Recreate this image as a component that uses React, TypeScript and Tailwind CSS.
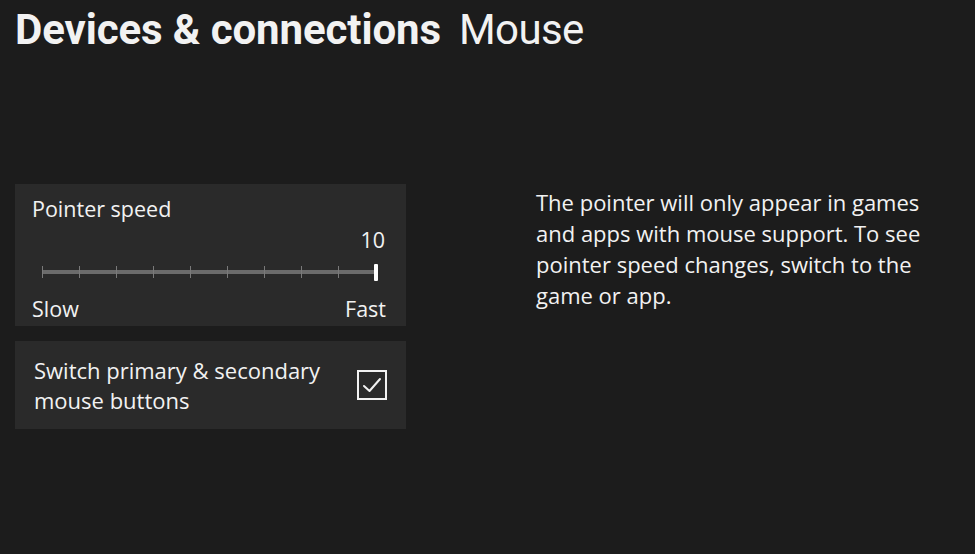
import React from "react";

const ui = { fontFamily: '"Open Sans", "Noto Sans", sans-serif' };
const head = { fontFamily: 'Roboto, "Liberation Sans", sans-serif' };

export default function App() {
  const ticks = Array.from({ length: 10 }, (_, i) => i);
  return (
    <div className="w-[975px] h-[554px] bg-[#1c1c1c] text-[#f2f2f2] overflow-hidden" style={ui}>
      <div className="pl-[15px] pt-[4px] flex items-baseline gap-[18px] text-[42px] leading-[52px]" style={head}>
        <span className="font-bold tracking-[-0.1px]">Devices &amp; connections</span>
        <span className="font-normal tracking-[-0.6px]">Mouse</span>
      </div>
      <div className="flex mt-[128px]">
        <div className="ml-[15px] w-[391px] flex flex-col gap-[15px]">
          <div className="bg-[#2a2a2a] h-[142px] pl-[17px] pr-[20px] pt-[10px] flex flex-col">
            <div className="text-[21.5px] leading-[30px]">Pointer speed</div>
            <div className="text-[21.5px] leading-[26px] text-right pr-[1px] mt-[3px]">10</div>
            <div className="relative h-[18px] ml-[10px] mr-[8px] mt-[10px]">
              <div className="absolute left-0 right-[1px] top-[7px] h-[4px] bg-[#6b6b6b]" />
              {ticks.map((i) => (
                <div
                  key={i}
                  className="absolute top-[3px] w-[1px] h-[12px] bg-[#7a7a7a]"
                  style={{ left: `${(i * 333) / 9}px` }}
                />
              ))}
              <div className="absolute right-0 top-[1px] w-[4px] h-[17px] bg-white rounded-[1px]" />
            </div>
            <div className="flex justify-between text-[21.5px] leading-[30px] mt-[13px]">
              <span>Slow</span>
              <span>Fast</span>
            </div>
          </div>
          <div className="bg-[#2a2a2a] h-[88px] pl-[19px] pr-[19px] flex items-center justify-between">
            <div className="text-[22px] leading-[30px]">
              Switch primary &amp; secondary
              <br />
              mouse buttons
            </div>
            <div className="w-[30px] h-[30px] border-2 border-[#f2f2f2] flex items-center justify-center">
              <svg width="22" height="22" viewBox="0 0 22 22" fill="none">
                <path d="M3 12 L8.5 17 L19 5" stroke="#f2f2f2" strokeWidth="2" strokeLinecap="round" strokeLinejoin="round" />
              </svg>
            </div>
          </div>
        </div>
        <div className="ml-[130px] w-[410px] text-[22px] leading-[31px] mt-[3px]">
          The pointer will only appear in games and apps with mouse support. To see pointer speed changes, switch to the game or app.
        </div>
      </div>
    </div>
  );
}
